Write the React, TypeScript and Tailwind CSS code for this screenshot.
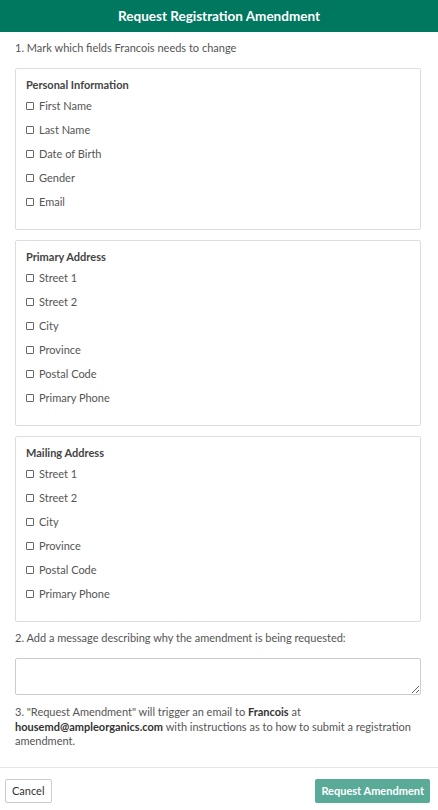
import React from 'react';

const sections = [
  { title: 'Personal Information', fields: ['First Name', 'Last Name', 'Date of Birth', 'Gender', 'Email'] },
  { title: 'Primary Address', fields: ['Street 1', 'Street 2', 'City', 'Province', 'Postal Code', 'Primary Phone'] },
  { title: 'Mailing Address', fields: ['Street 1', 'Street 2', 'City', 'Province', 'Postal Code', 'Primary Phone'] },
];

const FieldCard = ({ title, fields }: { title: string; fields: string[] }) => (
  <div className="border border-[#dddddd] rounded-[2px] px-[10px] pt-[9px] pb-[20px]">
    <div className="text-[11px] leading-[14px] font-bold text-[#444]">{title}</div>
    <div className="flex flex-col gap-[10px] mt-[7px]">
      {fields.map((f, i) => (
        <label key={i} className="flex items-center gap-[5px] h-[14px] text-[11px] text-[#555]">
          <span className="w-[8px] h-[8px] border border-[#666] rounded-[1px] bg-white" />
          <span>{f}</span>
        </label>
      ))}
    </div>
  </div>
);

export default function App() {
  return (
    <div className="w-[438px] h-[810px] bg-white flex flex-col" style={{ fontFamily: 'Lato, "Open Sans", sans-serif' }}>
      <div className="h-[32px] bg-[#00775f] flex items-center justify-center">
        <h1 className="text-white font-bold text-[13.5px]">Request Registration Amendment</h1>
      </div>
      <div className="px-[15px] pt-[9px] flex flex-col">
        <p className="text-[11px] leading-[14px] text-[#555]">1. Mark which fields Francois needs to change</p>
        <div className="flex flex-col gap-[10px] mt-[13px] mr-[2px]">
          {sections.map((s, i) => (
            <FieldCard key={i} title={s.title} fields={s.fields} />
          ))}
        </div>
        <p className="text-[11px] leading-[14px] text-[#555] mt-[9px]">2. Add a message describing why the amendment is being requested:</p>
        <textarea className="mt-[13px] h-[37px] border border-[#cccccc] rounded-[2px] mr-[2px] resize-y outline-none" />
        <p className="text-[11px] leading-[14.5px] text-[#555] mt-[10px] pr-[10px]">
          3. "Request Amendment" will trigger an email to <b className="text-[#333]">Francois</b> at{' '}
          <b className="text-[#333]">housemd@ampleorganics.com</b> with instructions as to how to submit a registration amendment.
        </p>
      </div>
      <div className="mt-auto border-t border-[#e5e5e5] px-[5px] pt-[11px] pb-[7px] flex justify-between items-center">
        <button className="h-[24px] px-[6px] border border-[#cccccc] rounded-[2px] bg-white text-[11px] text-[#333]">Cancel</button>
        <button className="h-[24px] px-[6px] mr-[3px] rounded-[2px] bg-[#5aaa98] text-white font-bold text-[11px]">Request Amendment</button>
      </div>
    </div>
  );
}
